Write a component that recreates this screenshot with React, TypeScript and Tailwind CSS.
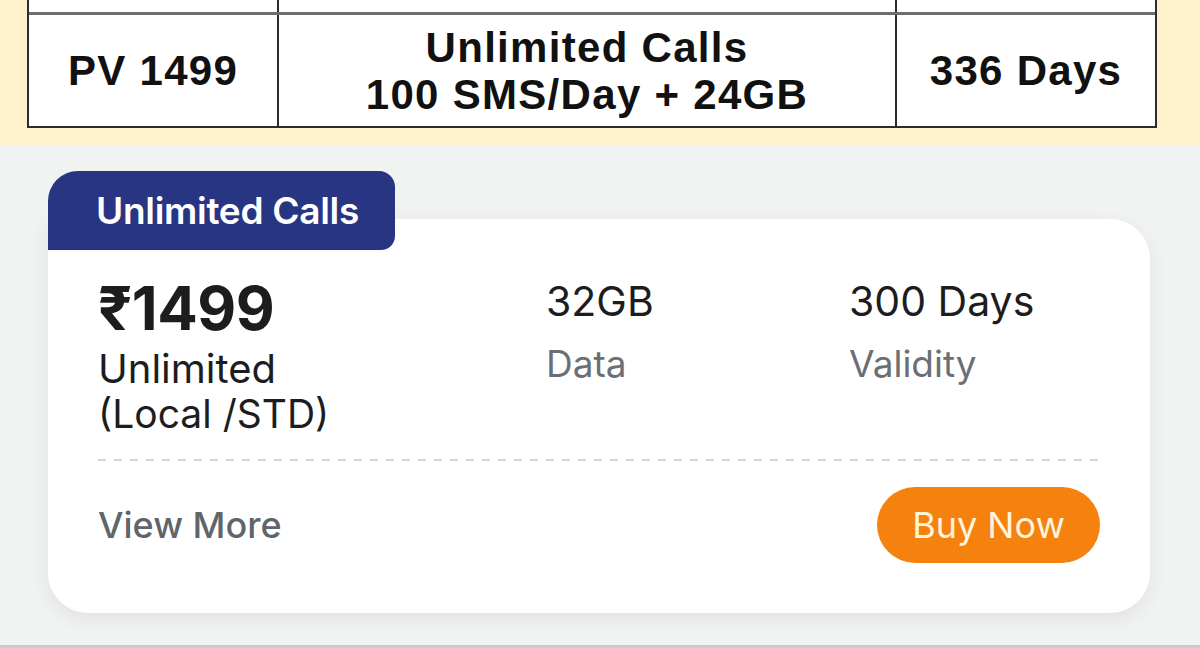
import { clsx } from 'clsx'

const plan = {
  tag: 'Unlimited Calls',
  price: '₹1499',
  calls: ['Unlimited', '(Local /STD)'],
  data: '32GB',
  validity: '300 Days',
}

function LegacyTable() {
  return (
    <div className="h-[146px] bg-[#fdf2cc] pl-[27px] pr-[43px]">
      <div className="flex flex-col border-x-2 border-b-2 border-[#2c2c2c] bg-white font-['Liberation_Sans',sans-serif] font-bold tracking-[1.3px] text-[#111]">
        {/* tail of the previous row, cut off by the screenshot */}
        <div className="grid h-[12px] grid-cols-[250px_618px_1fr]">
          <div className="border-r-2 border-[#2c2c2c]" />
          <div className="border-r-2 border-[#2c2c2c]" />
          <div />
        </div>
        <div className="h-[3px] bg-[#6e6e6e]" />
        <div className="grid h-[111px] grid-cols-[250px_618px_1fr] items-center text-center">
          <div className="flex h-full items-center justify-center border-r-2 border-[#2c2c2c] text-[42px]">
            PV 1499
          </div>
          <div className="flex h-full flex-col items-center justify-center border-r-2 border-[#2c2c2c] text-[42px] leading-[47px]">
            <span>Unlimited Calls</span>
            <span>100 SMS/Day + 24GB</span>
          </div>
          <div className="text-[42px]">336 Days</div>
        </div>
      </div>
    </div>
  )
}

function Stat({ value, label }: { value: string; label: string }) {
  return (
    <div className="flex flex-col">
      <span className="text-[41px] leading-[46px] text-[#1d1d1f]">{value}</span>
      <span className="mt-[18px] text-[37px] leading-[44px] text-[#6b6f75]">{label}</span>
    </div>
  )
}

function PlanCard() {
  return (
    <div className="relative pt-[48px]">
      <div className="rounded-b-[40px] rounded-tr-[40px] bg-white px-[50px] pb-[50px] pt-[59px] shadow-[0_6px_20px_rgba(0,0,0,0.07)]">
        <div className="grid grid-cols-[448px_303px_1fr]">
          <div className="flex flex-col">
            <span className="text-[60px] font-bold leading-[60px] tracking-[-0.5px] text-[#1d1d1f]">
              {plan.price}
            </span>
            <span className="mt-[8px] text-[40px] leading-[45px] text-[#1d1d1f]">{plan.calls[0]}</span>
            <span className="text-[39px] leading-[45px] text-[#1d1d1f]">{plan.calls[1]}</span>
          </div>
          <Stat value={plan.data} label="Data" />
          <Stat value={plan.validity} label="Validity" />
        </div>
        <div className="mt-[23px] h-[2px] bg-[linear-gradient(to_right,#d3d5d7_50%,transparent_50%)] bg-[length:16px_2px]" />
        <div className="mt-[26px] flex items-center justify-between">
          <span className="text-[36px] font-medium text-[#5f656b]">View More</span>
          <button
            className={clsx(
              'flex h-[76px] w-[223px] items-center justify-center rounded-full',
              'bg-[#f5820f] text-[36px] text-[#fff4dc]'
            )}
          >
            Buy Now
          </button>
        </div>
      </div>
      <div className="absolute left-0 top-0 flex h-[79px] w-[347px] items-start rounded-tl-[30px] rounded-tr-[16px] rounded-br-[14px] bg-[#283583] pl-[48px] pt-[18px]">
        <span className="text-[37px] font-semibold leading-[44px] tracking-[-0.3px] text-white">{plan.tag}</span>
      </div>
    </div>
  )
}

export default function App() {
  return (
    <div className="flex h-[648px] w-[1200px] flex-col overflow-hidden font-['Inter',sans-serif]">
      <LegacyTable />
      <div className="flex-1 bg-[#f1f3f3] pl-[48px] pr-[50px] pt-[25px]">
        <PlanCard />
      </div>
      <div className="h-[3px] bg-[#c9cbcb]" />
    </div>
  )
}
